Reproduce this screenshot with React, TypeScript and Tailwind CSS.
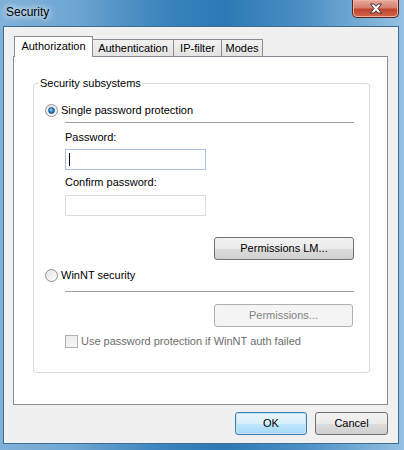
import React from 'react';

const tabs = ['Authorization', 'Authentication', 'IP-filter', 'Modes'];
const tabWidths = ['w-[79px]', 'w-[81px]', 'w-[48px]', 'w-[41px]'];

const Radio: React.FC<{ checked?: boolean }> = ({ checked }) => (
  <span className="w-[13px] h-[13px] rounded-full border border-[#8e8f8f] bg-[linear-gradient(135deg,#e4e4e4,#fdfdfd)] flex items-center justify-center shrink-0">
    {checked && (
      <span className="w-[7px] h-[7px] rounded-full bg-[radial-gradient(circle_at_40%_35%,#9fe0ff_0%,#2f8ad0_45%,#164a7d_100%)] border border-[#1b4f80]" />
    )}
  </span>
);

const Button: React.FC<{ label: string; className?: string; disabled?: boolean; focused?: boolean }> = ({
  label,
  className = '',
  disabled,
  focused,
}) => {
  let look =
    'border-[#707070] bg-[linear-gradient(to_bottom,#f2f2f2_0%,#ebebeb_50%,#dddddd_51%,#cfcfcf_100%)] text-black';
  if (disabled) look = 'border-[#adb2b5] bg-[#f4f4f4] text-[#838383]';
  if (focused)
    look =
      'border-[#3c7fb1] bg-[linear-gradient(to_bottom,#eaf6fd_0%,#d9f0fc_50%,#bee6fd_51%,#a7d9f5_100%)] text-black shadow-[inset_0_0_0_1px_#c4e5f6]';
  return (
    <div className={`h-[23px] rounded-[3px] border flex items-center justify-center text-[11px] ${look} ${className}`}>
      {label}
    </div>
  );
};

export default function App() {
  return (
    <div className="w-[404px] h-[450px] flex flex-col font-['Liberation_Sans'] bg-[linear-gradient(to_right,#7fb1d9_0%,#6ea6d2_18%,#3b84bd_40%,#2c79b4_55%,#4a8fc4_75%,#95c1e2_100%)]">
      {/* title bar */}
      <div className="h-[26px] flex items-start justify-between">
        <div className="pl-[6px] pt-[4px] text-[12px] leading-[16px] text-black [text-shadow:0_0_6px_#ffffff,0_0_10px_#ffffff]">
          Security
        </div>
        <div className="w-[47px] h-[18px] mr-[5px] rounded-b-[5px] border border-t-0 border-[#5a241b] bg-[linear-gradient(to_bottom,#e9a99a_0%,#d7806e_45%,#c0452c_55%,#d0654c_100%)] flex items-center justify-center shadow-[inset_0_0_0_1px_#eab1a4]">
          <svg width="14" height="11" viewBox="0 0 14 11">
            <path
              d="M1.5 1 H5 L7 3.3 L9 1 H12.5 L8.9 5.5 L12.5 10 H9 L7 7.7 L5 10 H1.5 L5.1 5.5 Z"
              fill="#ffffff"
              stroke="#3a3a3a"
              strokeWidth="1"
              strokeLinejoin="round"
            />
          </svg>
        </div>
      </div>

      {/* client area */}
      <div className="flex-1 ml-[3px] mr-[5px] mb-[6px] border border-[#3c6d92] bg-[#f0f0f0] flex flex-col">
        <div className="pl-[9px] pt-[9px]">
          {/* tab strip */}
          <div className="flex items-end h-[20px] pl-[1px]">
            {tabs.map((t, i) =>
              i === 0 ? (
                <div
                  key={t}
                  className={`${tabWidths[i]} h-[21px] -mb-px relative z-10 bg-white border border-b-0 border-[#898c95] flex items-start justify-center pt-[3px] text-[11px] leading-[13px] text-black`}
                >
                  {t}
                </div>
              ) : (
                <div
                  key={t}
                  className={`${tabWidths[i]} h-[17px] border border-b-0 border-l-0 border-[#898c95] bg-[linear-gradient(to_bottom,#f2f2f2,#e3e3e3)] flex items-center justify-center text-[11px] leading-[13px] text-black`}
                >
                  {t}
                </div>
              )
            )}
          </div>

          {/* tab panel */}
          <div className="w-[375px] h-[349px] border border-[#898c95] bg-white pt-[20px] pl-[19px]">
            <fieldset className="w-[337px] h-[296px] border border-[#dcdcdc] rounded-[3px]">
              <legend className="ml-[5px] px-[1px] text-[11px] leading-[13px] text-black">Security subsystems</legend>
              <div className="flex flex-col pl-[11px] pr-[15px] text-[11px] leading-[13px] text-black">
                <div className="mt-[14px] h-[13px] flex items-center gap-[3px]">
                  <Radio checked />
                  <span>Single password protection</span>
                </div>
                <div className="ml-[20px] flex flex-col">
                  <div className="mt-[5px] h-px bg-[#a0a0a0]" />
                  <div className="mt-[8px]">Password:</div>
                  <div className="mt-[5px] w-[141px] h-[21px] border border-[#abc1de] bg-white flex items-center pl-[3px]">
                    <span className="w-px h-[13px] bg-black" />
                  </div>
                  <div className="mt-[6px]">Confirm password:</div>
                  <div className="mt-[6px] w-[141px] h-[21px] border border-[#d9dde3] bg-white" />
                  <div className="mt-[21px] flex justify-end">
                    <Button label="Permissions LM..." className="w-[140px]" />
                  </div>
                </div>
                <div className="mt-[9px] h-[13px] flex items-center gap-[3px]">
                  <Radio />
                  <span>WinNT security</span>
                </div>
                <div className="ml-[20px] flex flex-col">
                  <div className="mt-[9px] h-px bg-[#a0a0a0]" />
                  <div className="mt-[12px] flex justify-end">
                    <Button label="Permissions..." className="w-[139px] mr-px" disabled />
                  </div>
                  <div className="mt-[8px] h-[13px] flex items-center gap-[3px] text-[#6d6d6d]">
                    <span className="w-[13px] h-[13px] border border-[#b1b1b1] bg-[linear-gradient(135deg,#e9e9e9,#f8f8f8)] shrink-0" />
                    <span>Use password protection if WinNT auth failed</span>
                  </div>
                </div>
              </div>
            </fieldset>
          </div>
        </div>

        {/* dialog buttons */}
        <div className="mt-[7px] flex justify-end gap-[8px] pr-[10px]">
          <Button label="OK" className="w-[72px]" focused />
          <Button label="Cancel" className="w-[73px]" />
        </div>
      </div>
    </div>
  );
}
